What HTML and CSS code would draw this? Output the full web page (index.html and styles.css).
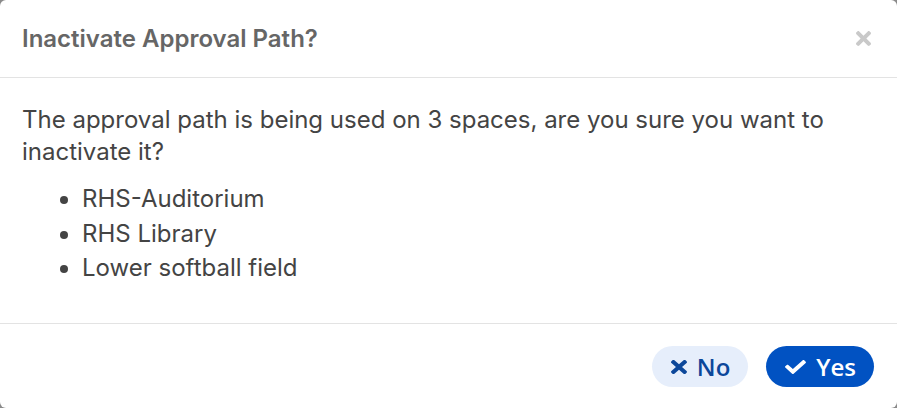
FILE: index.html
```html
<!DOCTYPE html>
<html lang="en">
<head>
<meta charset="utf-8">
<title>Inactivate Approval Path?</title>
<link rel="stylesheet" href="styles.css">
</head>
<body>
<div class="modal">
  <div class="modal-header">
    <h2 class="modal-title">Inactivate Approval Path?</h2>
    <button class="close-btn" aria-label="Close">
      <svg viewBox="0 80 352 352" class="close-icon"><path d="M242.72 256l100.07-100.07c12.28-12.28 12.28-32.19 0-44.48l-22.24-22.24c-12.28-12.28-32.19-12.28-44.48 0L176 189.28 75.93 89.21c-12.28-12.28-32.19-12.28-44.48 0L9.21 111.45c-12.28 12.28-12.28 32.19 0 44.48L109.28 256 9.21 356.07c-12.28 12.28-12.28 32.19 0 44.48l22.24 22.24c12.28 12.280 32.2 12.28 44.48 0L176 322.72l100.07 100.07c12.28 12.28 32.2 12.28 44.48 0l22.24-22.24c12.28-12.28 12.28-32.19 0-44.48L242.72 256z"/></svg>
    </button>
  </div>
  <div class="modal-body">
    <p class="message">The approval path is being used on 3 spaces, are you sure you want to inactivate it?</p>
    <ul class="space-list">
      <li>RHS-Auditorium</li>
      <li>RHS Library</li>
      <li>Lower softball field</li>
    </ul>
  </div>
  <div class="modal-footer">
    <button class="btn btn-secondary">
      <svg viewBox="0 80 352 352" preserveAspectRatio="none" class="btn-icon times"><path d="M242.72 256l100.07-100.07c12.28-12.28 12.28-32.19 0-44.48l-22.24-22.24c-12.28-12.28-32.19-12.28-44.48 0L176 189.28 75.93 89.21c-12.28-12.28-32.19-12.28-44.48 0L9.21 111.45c-12.28 12.28-12.28 32.19 0 44.48L109.28 256 9.21 356.07c-12.28 12.28-12.28 32.19 0 44.48l22.24 22.24c12.28 12.28 32.2 12.28 44.48 0L176 322.72l100.07 100.07c12.28 12.28 32.2 12.28 44.48 0l22.24-22.24c12.28-12.28 12.28-32.19 0-44.48L242.72 256z"/></svg>
      <span>No</span>
    </button>
    <button class="btn btn-primary">
      <svg viewBox="0 64 512 384" preserveAspectRatio="none" class="btn-icon check"><path d="M173.898 439.404l-166.4-166.4c-9.997-9.997-9.997-26.206 0-36.204l36.203-36.204c9.997-9.998 26.207-9.998 36.204 0L192 312.69 432.095 72.596c9.997-9.997 26.207-9.997 36.204 0l36.203 36.204c9.997 9.997 9.997 26.206 0 36.204l-294.4 294.401c-9.998 9.997-26.207 9.997-36.204-.001z"/></svg>
      <span>Yes</span>
    </button>
  </div>
</div>
</body>
</html>
```

FILE: styles.css
```css
* {
  box-sizing: border-box;
}

html, body {
  margin: 0;
  padding: 0;
  background: #8a8a8a;
}

.modal {
  width: 897px;
  height: 408px;
  background: #ffffff;
  border-radius: 6px;
  display: flex;
  flex-direction: column;
  font-family: Inter, "Noto Sans", sans-serif;
  overflow: hidden;
}

.modal-header {
  height: 78px;
  padding: 0 22px;
  border-bottom: 1px solid #e3e3e3;
  display: flex;
  align-items: center;
  justify-content: space-between;
}

.modal-title {
  margin: 0;
  font-size: 24px;
  font-weight: 600;
  color: #666666;
}

.close-btn {
  border: 0;
  background: none;
  padding: 0;
  margin-right: 4px;
  display: flex;
  cursor: pointer;
}

.close-icon {
  width: 15px;
  height: 15px;
  fill: #c9c9c9;
}

.modal-body {
  flex: 1;
  padding: 26px 22px 0;
  color: #444444;
  font-size: 24px;
}

.message {
  margin: 0 0 14px;
  line-height: 32px;
}

.space-list {
  margin: 0;
  padding-left: 60px;
  line-height: 34.5px;
}

.modal-footer {
  height: 85px;
  border-top: 1px solid #e3e3e3;
  display: flex;
  justify-content: flex-end;
  align-items: flex-start;
  gap: 18px;
  padding: 22px 23px 0;
}

.btn {
  height: 41px;
  border: 0;
  border-radius: 21px;
  display: flex;
  align-items: center;
  gap: 10px;
  padding: 0 18px 0 19px;
  font-family: "Open Sans", sans-serif;
  font-size: 24px;
  font-weight: 600;
  cursor: pointer;
}

.btn-icon.times {
  width: 16px;
  height: 14px;
}

.btn-icon.check {
  width: 21px;
  height: 14px;
}

.btn-secondary {
  background: #e6eefb;
  color: #0c479a;
  fill: #0c479a;
}

.btn-primary {
  background: #0152c2;
  color: #ffffff;
  fill: #ffffff;
}
```
